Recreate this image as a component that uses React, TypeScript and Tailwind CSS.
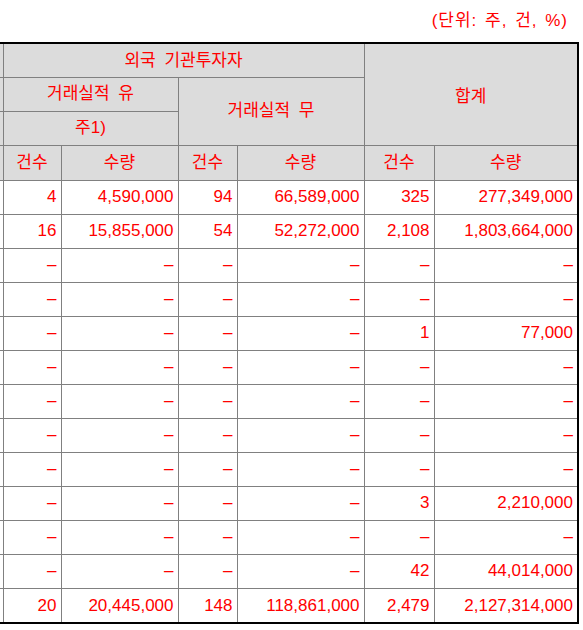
const rows: string[][] = [
  ['4', '4,590,000', '94', '66,589,000', '325', '277,349,000'],
  ['16', '15,855,000', '54', '52,272,000', '2,108', '1,803,664,000'],
  ['–', '–', '–', '–', '–', '–'],
  ['–', '–', '–', '–', '–', '–'],
  ['–', '–', '–', '–', '1', '77,000'],
  ['–', '–', '–', '–', '–', '–'],
  ['–', '–', '–', '–', '–', '–'],
  ['–', '–', '–', '–', '–', '–'],
  ['–', '–', '–', '–', '–', '–'],
  ['–', '–', '–', '–', '3', '2,210,000'],
  ['–', '–', '–', '–', '–', '–'],
  ['–', '–', '–', '–', '42', '44,014,000'],
  ['20', '20,445,000', '148', '118,861,000', '2,479', '2,127,314,000'],
];

const head = 'border border-[#808080] bg-[#dcdcdc] font-normal text-[17px] text-center p-0 [word-spacing:4px]';
const cell = 'border border-[#808080] text-right pr-[4px] pl-0 py-0 text-[17px]';

export default function App() {
  return (
    <div className="w-[583px] h-[630px] overflow-hidden bg-white text-[#ff0000] font-['Liberation_Sans','Noto_Sans_CJK_KR',sans-serif]">
      {/* unit caption */}
      <div className="h-[42px] flex items-center justify-end pr-[15px] text-[17px] tracking-[1px] [word-spacing:2px]">
        (단위: 주, 건, %)
      </div>

      <table className="border-collapse table-fixed">
        <colgroup>
          <col className="w-[3px]" />
          <col className="w-[58px]" />
          <col className="w-[117px]" />
          <col className="w-[59px]" />
          <col className="w-[127px]" />
          <col className="w-[70px]" />
          <col className="w-[144px]" />
        </colgroup>
        <thead>
          <tr className="h-[34px] border-t-2 border-t-black">
            <td className={`${head} border-l-0 border-t-2 border-t-black`} />
            <th colSpan={4} className={`${head} border-t-2 border-t-black`}>외국 기관투자자</th>
            <th colSpan={2} rowSpan={3} className={`${head} border-t-2 border-t-black border-r-2 border-r-black pt-[5px]`}>합계</th>
          </tr>
          <tr className="h-[34px]">
            <td className={`${head} border-l-0`} />
            <th colSpan={2} className={head}>거래실적 유</th>
            <th colSpan={2} rowSpan={2} className={head}>거래실적 무</th>
          </tr>
          <tr className="h-[34px]">
            <td className={`${head} border-l-0`} />
            <th colSpan={2} className={head}>주1)</th>
          </tr>
          <tr className="h-[35px]">
            <td className={`${head} border-l-0`} />
            <th className={head}>건수</th>
            <th className={head}>수량</th>
            <th className={head}>건수</th>
            <th className={head}>수량</th>
            <th className={head}>건수</th>
            <th className={`${head} border-r-2 border-r-black`}>수량</th>
          </tr>
        </thead>
        <tbody>
          {rows.map((r, i) => {
            const last = i === rows.length - 1;
            const bottom = last ? 'border-b-2 border-b-black' : '';
            return (
              <tr key={i} className={last ? 'h-[35px]' : 'h-[34px]'}>
                <td className={`border border-[#808080] border-l-0 p-0 ${bottom}`} />
                {r.map((v, j) => (
                  <td key={j} className={`${cell} ${bottom} ${j === 5 ? 'border-r-2 border-r-black' : ''}`}>
                    {v}
                  </td>
                ))}
              </tr>
            );
          })}
        </tbody>
      </table>
    </div>
  );
}
